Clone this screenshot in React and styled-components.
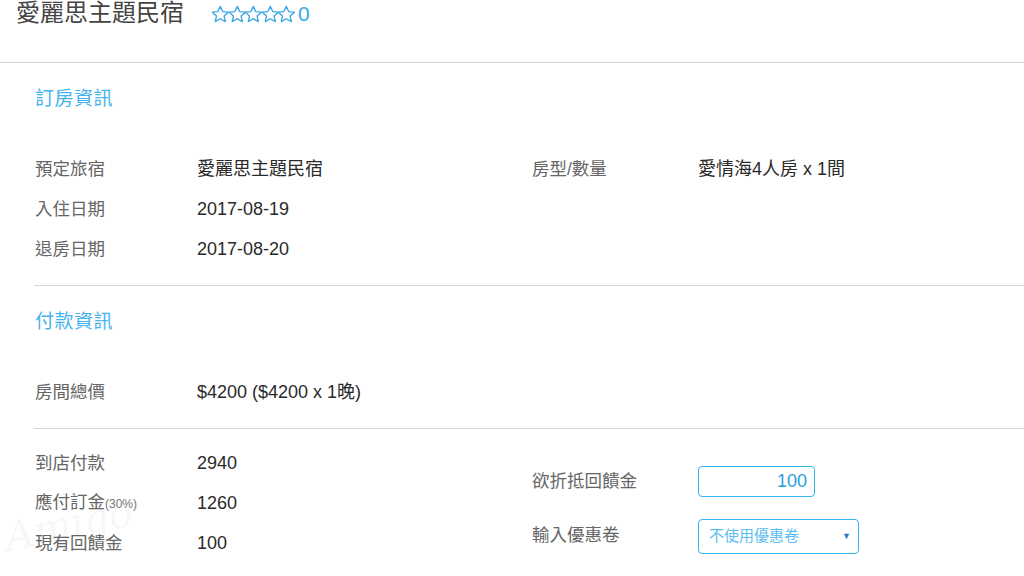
import React from "react";
import styled, { createGlobalStyle } from "styled-components";

const Global = createGlobalStyle`
  html, body { margin: 0; padding: 0; background: #fff; }
  body { font-family: "Liberation Sans", "Noto Sans CJK TC", sans-serif; color: #333; overflow: hidden; }
  * { box-sizing: border-box; }
`;

const Page = styled.div`
  position: relative;
  width: 1024px;
  height: 576px;
  overflow: hidden;
`;

const Header = styled.header`
  height: 63px;
  border-bottom: 1px solid #d2d2d2;
  display: flex;
  align-items: flex-start;
  padding-left: 16px;
  gap: 28px;
`;

const Title = styled.h1`
  margin: 0;
  font-size: 24px;
  font-weight: 400;
  line-height: 25px;
  color: #444;
`;

const Rating = styled.div`
  display: flex;
  align-items: center;
  height: 27px;
  color: #3ba7e4;
`;

const Stars = styled.div`
  display: flex;
  flex-shrink: 0;
`;

const Count = styled.span`
  font-size: 21px;
  margin-left: 3px;
  line-height: 26px;
`;

const Section = styled.section`
  margin-left: 34px;
  padding: ${(p) => p.$pad || "16px 0 16px 1px"};
  border-bottom: ${(p) => (p.$last ? "none" : "1px solid #d6d6d6")};
  display: flex;
  flex-direction: column;
`;

const SectionTitle = styled.h2`
  margin: 0 0 30px;
  font-size: 19px;
  font-weight: 400;
  line-height: 40px;
  color: #45b3ee;
  letter-spacing: 0.5px;
`;

const Grid = styled.div`
  display: grid;
  grid-template-columns: 162px 335px 166px 1fr;
  grid-auto-rows: 40px;
  align-items: center;
  font-size: 18px;
  line-height: 36px;
`;

const Label = styled.div`
  color: #666;
  font-size: 17.5px;
  white-space: nowrap;
`;

const Value = styled.div`
  color: #2a2a2a;
  white-space: nowrap;
`;

const Small = styled.span`
  font-size: 12px;
  color: #777;
`;

const Split = styled.div`
  display: flex;
`;

const LeftCol = styled(Grid)`
  width: 497px;
  grid-template-columns: 162px 335px;
`;

const RightCol = styled.div`
  display: grid;
  grid-template-columns: 166px auto;
  grid-auto-rows: 40px;
  row-gap: 14px;
  align-items: center;
  padding-top: 18px;
  font-size: 18px;
  line-height: 36px;
`;

const NumberInput = styled.input`
  width: 117px;
  height: 31px;
  border: 1px solid #33b5ee;
  border-radius: 4px;
  text-align: right;
  padding: 0 7px 0 0;
  font-family: "Liberation Sans", sans-serif;
  font-size: 18px;
  color: #2b9fdc;
  outline: none;
  background: #fff;
`;

const SelectBox = styled.div`
  width: 161px;
  height: 35px;
  margin-top: 2px;
  border: 1px solid #33b5ee;
  border-radius: 4px;
  display: flex;
  align-items: center;
  justify-content: space-between;
  padding: 0 7px 0 10px;
  font-size: 15px;
  line-height: 20px;
  color: #5cbdf0;
`;

const Caret = styled.span`
  font-size: 9px;
  color: #2a7fc0;
`;

const Watermark = styled.div`
  position: absolute;
  left: 4px;
  top: 500px;
  font-family: "DejaVu Serif", serif;
  font-style: italic;
  font-size: 40px;
  line-height: 48px;
  color: rgba(0, 0, 0, 0.045);
  transform: rotate(-12deg);
  pointer-events: none;
`;

const StarIcon = styled.svg`
  display: block;
  width: 16.6px;
  height: 18px;
  flex-shrink: 0;
`;

const Star = () => (
  <StarIcon viewBox="2 2 20 19.4" fill="none" stroke="currentColor" strokeWidth="1.6" strokeLinejoin="round">
    <path d="M12 2.5l2.9 6.3 6.9.7-5.2 4.6 1.5 6.8L12 17.4l-6.1 3.5 1.5-6.8-5.2-4.6 6.9-.7z" />
  </StarIcon>
);

export default function App() {
  return (
    <Page>
      <Global />
      <Header>
        <Title>愛麗思主題民宿</Title>
        <Rating>
          <Stars>
            {[0, 1, 2, 3, 4].map((i) => (
              <Star key={i} />
            ))}
          </Stars>
          <Count>0</Count>
        </Rating>
      </Header>

      <Section>
        <SectionTitle>訂房資訊</SectionTitle>
        <Grid>
          <Label>預定旅宿</Label>
          <Value>愛麗思主題民宿</Value>
          <Label>房型/數量</Label>
          <Value>愛情海4人房 x 1間</Value>
          <Label>入住日期</Label>
          <Value>2017-08-19</Value>
          <span />
          <span />
          <Label>退房日期</Label>
          <Value>2017-08-20</Value>
        </Grid>
      </Section>

      <Section>
        <SectionTitle>付款資訊</SectionTitle>
        <Grid>
          <Label>房間總價</Label>
          <Value>$4200 ($4200 x 1晚)</Value>
        </Grid>
      </Section>

      <Section $pad="14px 0 0 1px" $last>
        <Split>
          <LeftCol>
            <Label>到店付款</Label>
            <Value>2940</Value>
            <Label>
              應付訂金<Small>(30%)</Small>
            </Label>
            <Value>1260</Value>
            <Label>現有回饋金</Label>
            <Value>100</Value>
          </LeftCol>
          <RightCol>
            <Label>欲折抵回饋金</Label>
            <NumberInput readOnly value="100" />
            <Label>輸入優惠卷</Label>
            <SelectBox>
              <span>不使用優惠卷</span>
              <Caret>▼</Caret>
            </SelectBox>
          </RightCol>
        </Split>
      </Section>
      <Watermark>Amigo</Watermark>
    </Page>
  );
}
